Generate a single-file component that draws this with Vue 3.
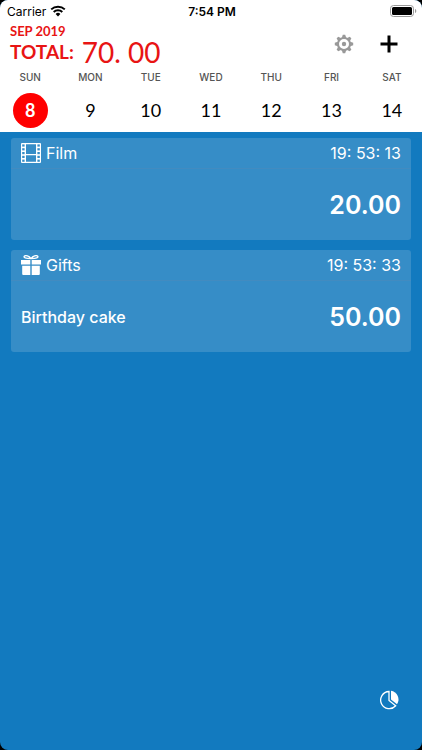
<script setup>
import { ref } from 'vue'

const days = [
  { name: 'SUN', date: 8 },
  { name: 'MON', date: 9 },
  { name: 'TUE', date: 10 },
  { name: 'WED', date: 11 },
  { name: 'THU', date: 12 },
  { name: 'FRI', date: 13 },
  { name: 'SAT', date: 14 },
]
const selected = ref(8)

const expenses = [
  { category: 'Film', icon: 'film', time: '19: 53: 13', note: '', amount: '20.00' },
  { category: 'Gifts', icon: 'gift', time: '19: 53: 33', note: 'Birthday cake', amount: '50.00' },
]

const perforations = [1.4, 5.2, 9, 12.8, 16.6]
const teeth = [0, 45, 90, 135, 180, 225, 270, 315]
</script>

<template>
  <div class="screen">
    <div class="top">
      <div class="status">
        <div class="carrier">
          <span>Carrier</span>
          <svg class="wifi" viewBox="0 0 16 12" aria-hidden="true">
            <path d="M1.2 4.4a9.8 9.8 0 0 1 13.6 0" />
            <path d="M3.7 7a6.2 6.2 0 0 1 8.6 0" />
            <path class="dot" d="M5.6 8.9a3.5 3.5 0 0 1 4.8 0L8 11.4z" />
          </svg>
        </div>
        <span class="clock">7:54 PM</span>
        <svg class="battery" viewBox="0 0 27 12" aria-hidden="true">
          <rect class="shell" x="0.5" y="0.5" width="23" height="11" rx="3" />
          <rect x="2" y="2" width="20" height="8" rx="1.5" />
          <path class="cap" d="M25 4c1.7.5 1.7 3.5 0 4z" />
        </svg>
      </div>

      <header class="header">
        <div>
          <p class="month">SEP 2019</p>
          <p class="total"><span class="label">TOTAL:</span><span class="sum">70. 00</span></p>
        </div>
        <div class="actions">
          <button type="button" class="icon-button" aria-label="Settings">
            <svg class="gear" viewBox="0 0 20 20">
              <circle class="ring" cx="10" cy="10" r="6" />
              <circle cx="10" cy="10" r="2.2" />
              <path v-for="a in teeth" :key="a" d="M7.6 4.5L8.8.8h2.4l1.2 3.7z" :transform="`rotate(${a} 10 10)`" />
            </svg>
          </button>
          <button type="button" class="icon-button" aria-label="Add expense">
            <svg class="plus" viewBox="0 0 18 18"><path d="M9 .5v17M.5 9h17" /></svg>
          </button>
        </div>
      </header>

      <nav class="week" aria-label="Week">
        <button
          v-for="day in days"
          :key="day.date"
          type="button"
          class="day"
          :class="{ active: day.date === selected }"
          @click="selected = day.date"
        >
          <span class="name">{{ day.name }}</span>
          <span class="date">{{ day.date }}</span>
        </button>
      </nav>
    </div>

    <main class="list">
      <article v-for="item in expenses" :key="item.time" class="card">
        <div class="card-head">
          <svg v-if="item.icon === 'film'" class="category-icon" viewBox="0 0 20 20" aria-hidden="true">
            <path
              fill-rule="evenodd"
              d="M1 0h18a1 1 0 0 1 1 1v18a1 1 0 0 1-1 1H1a1 1 0 0 1-1-1V1a1 1 0 0 1 1-1zM5 1.2v9.8h10V1.2zM5 12.3v6.5h10v-6.5z"
            />
            <g class="hole">
              <rect v-for="y in perforations" :key="'l' + y" x="1.2" :y="y" width="2.4" height="2.2" />
              <rect v-for="y in perforations" :key="'r' + y" x="16.4" :y="y" width="2.4" height="2.2" />
            </g>
          </svg>
          <svg v-else class="category-icon" viewBox="0 0 20 20" aria-hidden="true">
            <path d="M0 5h9.3v4.5H0zM10.7 5H20v4.5h-9.3zM1.2 10.7h8.1V20H2.2a1 1 0 0 1-1-1zM10.7 10.7h8.1V19a1 1 0 0 1-1 1h-7.1z" />
            <path class="bow" d="M10 3.6C8 .8 4.5 0 3.3 1.2 2.3 2.7 4.5 3.4 10 3.6zM10 3.6C12 .8 15.5 0 16.7 1.2 17.7 2.7 15.5 3.4 10 3.6z" />
          </svg>
          <h2 class="category">{{ item.category }}</h2>
          <time class="time">{{ item.time }}</time>
        </div>
        <div class="card-body">
          <span class="note">{{ item.note }}</span>
          <span class="amount">{{ item.amount }}</span>
        </div>
      </article>
    </main>

    <footer class="footer">
      <button type="button" class="icon-button" aria-label="Statistics">
        <svg class="pie" viewBox="0 0 20 20">
          <path class="outline" d="M9 1.5a8.6 8.6 0 1 0 6.7 14.3L9 10.5z" />
          <path class="slice" d="M11 .8a8.7 8.7 0 0 1 6 13.5l-6-4.8z" />
        </svg>
      </button>
    </footer>
  </div>
</template>

<style>
html {
  background: #000;
}
</style>

<style scoped>
.screen {
  display: flex;
  flex-direction: column;
  min-height: 100vh;
  overflow: hidden;
  border-radius: 8px;
  background: #127abf;
  font-family: Inter, "Liberation Sans", sans-serif;
}

.top {
  background: #fff;
  color: #000;
}

.status {
  display: grid;
  grid-template-columns: 1fr auto 1fr;
  align-items: center;
  height: 22px;
  padding: 0 5px 0 7px;
  font-size: 12px;
}

.carrier {
  display: flex;
  align-items: center;
  gap: 4px;
}

.wifi {
  width: 16px;
  height: 12px;
  fill: none;
  stroke: #000;
  stroke-width: 2;
}

.wifi .dot {
  fill: #000;
  stroke: none;
}

.clock {
  font-weight: 600;
}

.battery {
  justify-self: end;
  width: 27px;
  height: 12px;
}

.battery .shell {
  fill: none;
  stroke: #999;
}

.battery .cap {
  fill: #999;
}

.header {
  display: flex;
  justify-content: space-between;
  height: 44px;
  padding: 0 24px 0 10px;
  color: #e81414;
  font-family: Lato, sans-serif;
}

.month,
.total {
  margin: 0;
}

.month {
  padding-top: 2px;
  font-size: 13px;
  line-height: 14px;
  font-weight: 700;
}

.total {
  display: flex;
  align-items: center;
  gap: 8px;
  line-height: 28px;
}

.label {
  font-size: 19px;
  font-weight: 700;
}

.sum {
  font-size: 28px;
}

.actions {
  display: flex;
  align-items: center;
  gap: 26px;
}

.icon-button {
  display: flex;
  padding: 0;
  border: 0;
  background: none;
  cursor: pointer;
}

.gear {
  width: 20px;
  height: 20px;
  fill: #999;
}

.gear .ring {
  fill: none;
  stroke: #999;
  stroke-width: 2;
}

.plus {
  width: 18px;
  height: 18px;
  stroke: #000;
  stroke-width: 3;
}

.week {
  display: grid;
  grid-template-columns: repeat(7, 1fr);
  height: 66px;
}

.day {
  display: flex;
  flex-direction: column;
  align-items: center;
  gap: 9px;
  padding: 4px 0 0;
  border: 0;
  background: none;
  color: #000;
  cursor: pointer;
}

.name {
  color: #555;
  font: 500 10px/14px Inter, sans-serif;
}

.date {
  width: 35px;
  border-radius: 50%;
  font: 400 18px/35px Lato, sans-serif;
}

.active .date {
  background: #f00;
  color: #fff;
  font-weight: 700;
}

.list {
  display: flex;
  flex: 1;
  flex-direction: column;
  gap: 10px;
  padding: 6px 11px 0;
  color: #fff;
}

.card {
  border-radius: 3px;
  background: #368dc7;
}

.card-head {
  display: flex;
  align-items: center;
  height: 30px;
  padding: 0 10px;
  border-bottom: 1px solid #428bc0;
  font-size: 16px;
}

.category-icon {
  width: 20px;
  height: 20px;
  fill: #fff;
}

.hole {
  fill: #368dc7;
}

.bow {
  fill: none;
  stroke: #fff;
  stroke-width: 1.3;
}

.category {
  margin: 0 auto 0 5px;
  font-size: 16px;
  font-weight: 400;
}

.card-body {
  display: flex;
  align-items: center;
  justify-content: space-between;
  height: 71px;
  padding: 0 10px;
}

.note {
  font-size: 16px;
  font-weight: 500;
}

.amount {
  font-size: 25px;
  font-weight: 600;
}

.footer {
  display: flex;
  justify-content: flex-end;
  padding: 0 22px 40px;
}

.pie {
  width: 20px;
  height: 20px;
}

.outline {
  fill: none;
  stroke: #fff;
  stroke-width: 1.3;
}

.slice {
  fill: #fff;
}
</style>
